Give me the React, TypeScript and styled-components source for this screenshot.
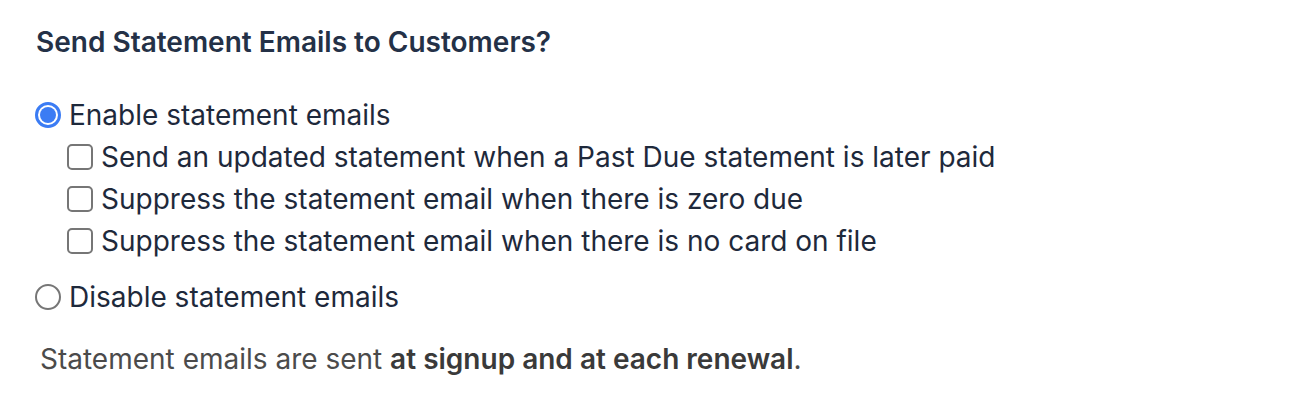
import styled, {createGlobalStyle} from "styled-components";

const GlobalStyle = createGlobalStyle`
    html, body {
        margin: 0;
        padding: 0;
        background: #ffffff;
    }
    body {
        font-family: Inter, "Noto Sans", sans-serif;
        color: #1e293b;
    }
`;

const Wrapper = styled.section`
    padding: 24px 0 0 36px;
`;

const Heading = styled.h2`
    margin: 0;
    font-size: 28px;
    line-height: 36px;
    font-weight: 600;
    color: #243147;
`;

const OptionList = styled.div`
    margin-top: 34px;
    display: flex;
    flex-direction: column;
`;

const Row = styled.label<{ $indent?: boolean; $gap?: number }>`
    display: flex;
    align-items: center;
    gap: 8px;
    height: 42px;
    padding-left: ${(p) => (p.$indent ? "32px" : "0")};
    margin-top: ${(p) => p.$gap ?? 0}px;
    font-size: 28px;
    color: #1e293b;
    cursor: pointer;
`;

const Radio = styled.span<{ $checked?: boolean }>`
    box-sizing: border-box;
    width: 26px;
    height: 26px;
    margin-left: -1px;
    border-radius: 50%;
    flex-shrink: 0;
    border: ${(p) => (p.$checked ? "3px solid #3b7cf4" : "2px solid #767676")};
    padding: 2px;
    background-clip: content-box;
    background-color: ${(p) => (p.$checked ? "#3b7cf4" : "transparent")};
`;

const Checkbox = styled.span`
    box-sizing: border-box;
    width: 26px;
    height: 26px;
    margin-left: -1px;
    border-radius: 5px;
    flex-shrink: 0;
    border: 2px solid #767676;
    background: #fff;
`;

const Note = styled.p`
    margin: 24px 0 0 4px;
    font-size: 28px;
    color: #4b4b4b;
`;

const Strong = styled.strong`
    font-weight: 600;
    color: #3a3a3a;
`;

const subOptions = [
    "Send an updated statement when a Past Due statement is later paid",
    "Suppress the statement email when there is zero due",
    "Suppress the statement email when there is no card on file",
];

export default function App() {
    return (
        <>
            <GlobalStyle />
            <Wrapper>
                <Heading>Send Statement Emails to Customers?</Heading>
                <OptionList>
                    <Row>
                        <Radio $checked />
                        Enable statement emails
                    </Row>
                    {subOptions.map((text) => (
                        <Row key={text} $indent>
                            <Checkbox />
                            {text}
                        </Row>
                    ))}
                    <Row $gap={14}>
                        <Radio />
                        Disable statement emails
                    </Row>
                </OptionList>
                <Note>
                    Statement emails are sent <Strong>at signup and at each renewal</Strong>.
                </Note>
            </Wrapper>
        </>
    );
}
